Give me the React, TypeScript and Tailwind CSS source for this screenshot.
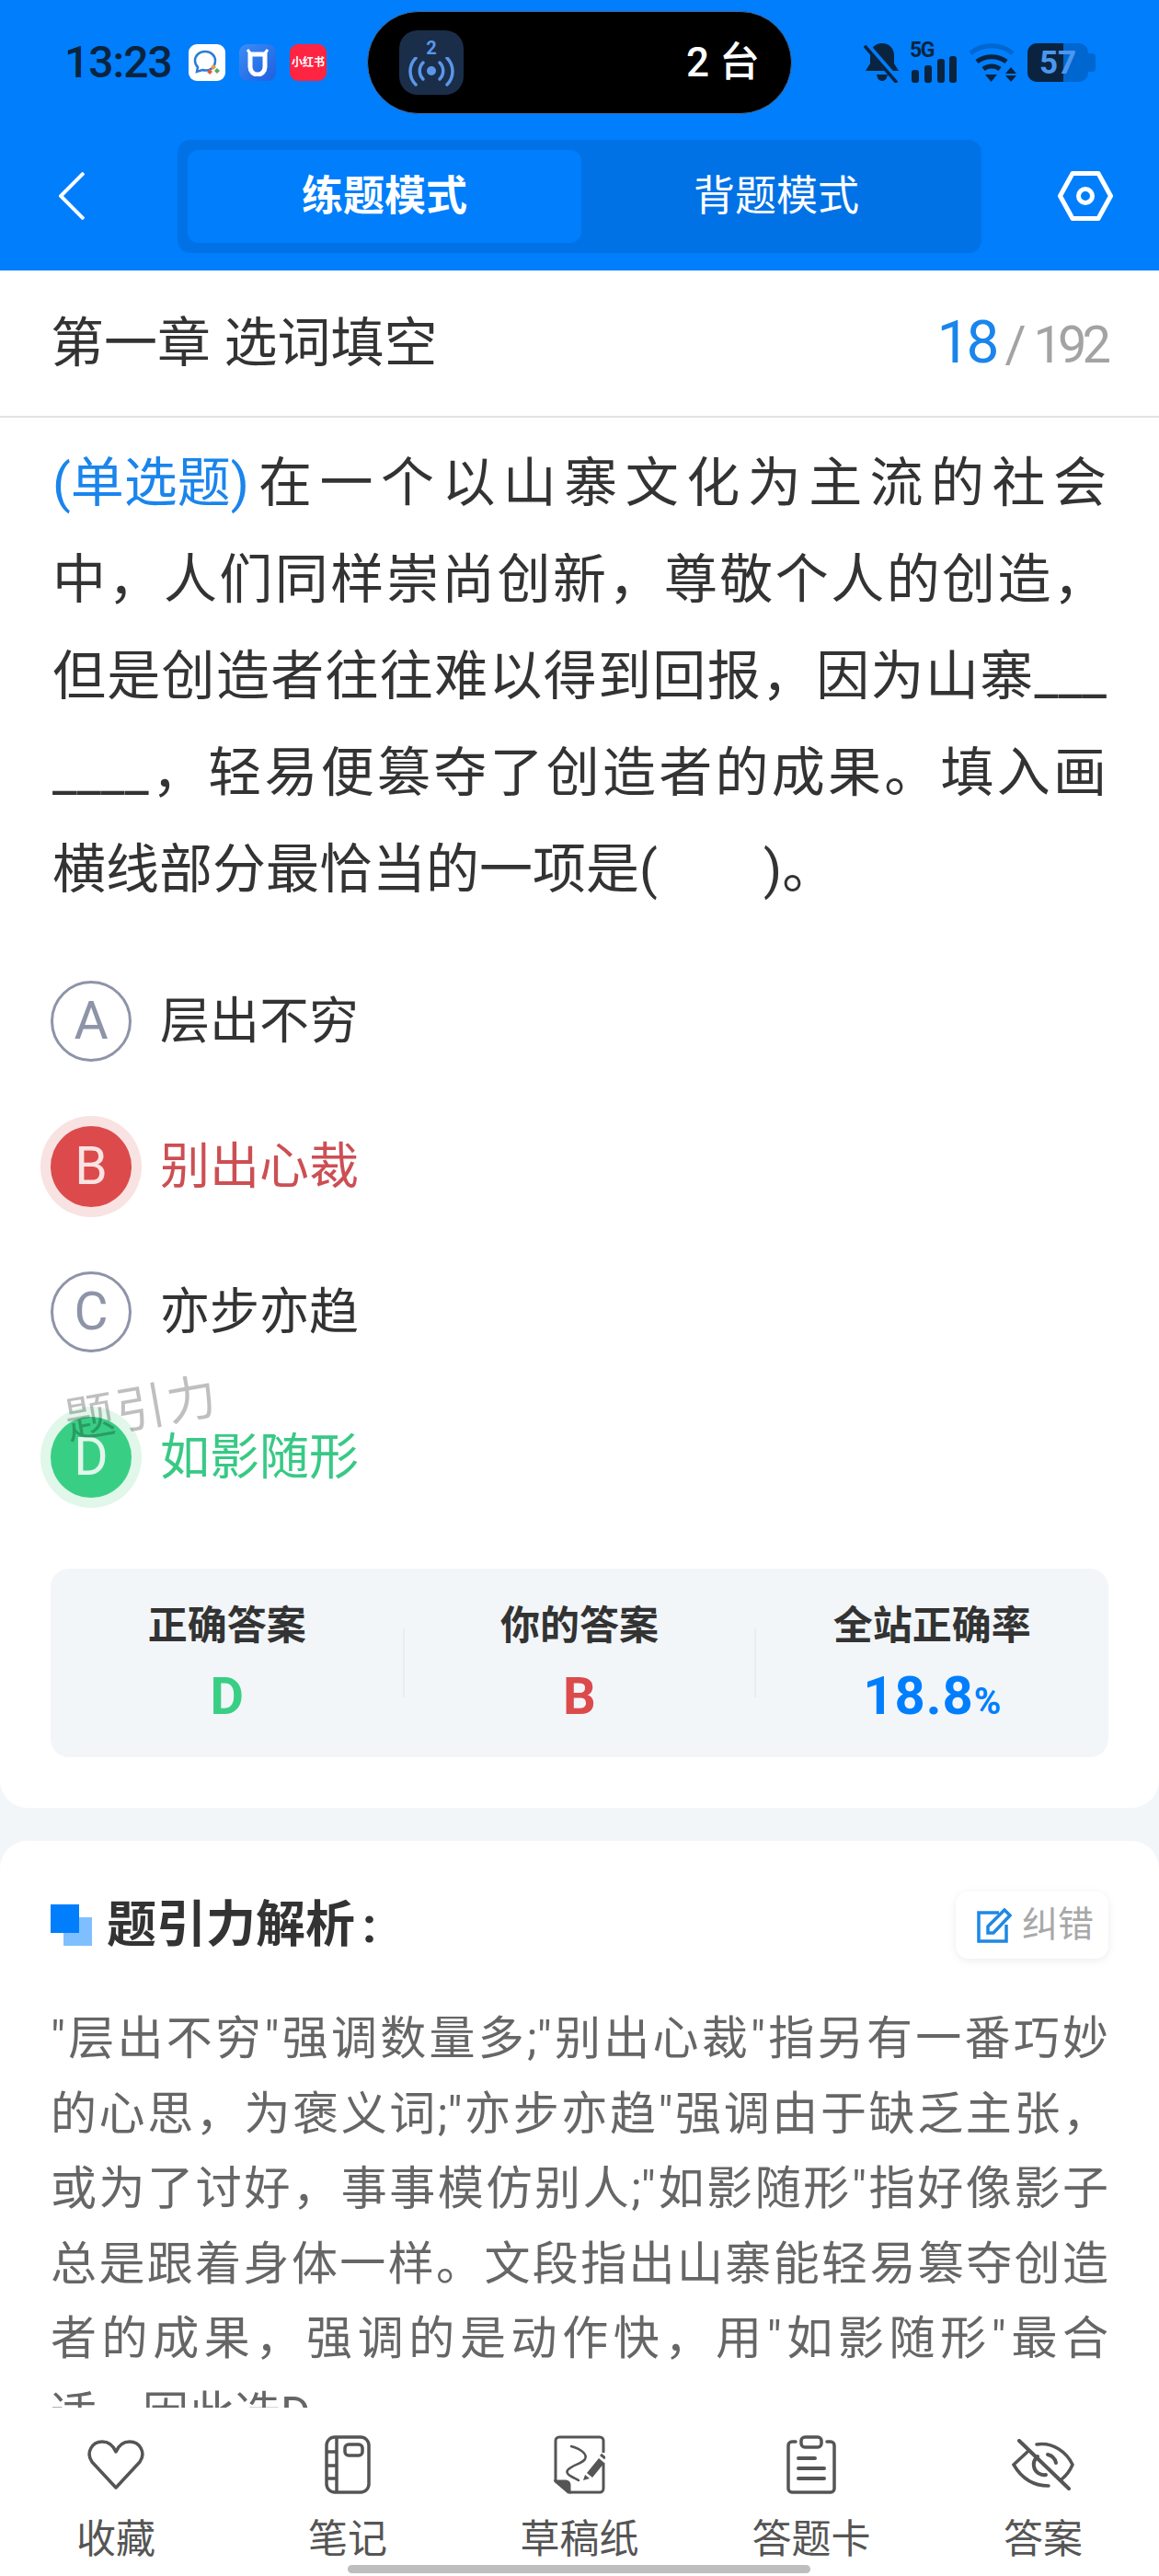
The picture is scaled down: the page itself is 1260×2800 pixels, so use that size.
const QUESTION_LINES = [
  "在一个以山寨文化为主流的社会",
  "中，人们同样崇尚创新，尊敬个人的创造，",
  "但是创造者往往难以得到回报，因为山寨___",
  "____，轻易便篡夺了创造者的成果。填入画",
];

const ANALYSIS_LINES = [
  "\"层出不穷\"强调数量多;\"别出心裁\"指另有一番巧妙",
  "的心思，为褒义词;\"亦步亦趋\"强调由于缺乏主张，",
  "或为了讨好，事事模仿别人;\"如影随形\"指好像影子",
  "总是跟着身体一样。文段指出山寨能轻易篡夺创造",
  "者的成果，强调的是动作快，用\"如影随形\"最合",
];

const OPTIONS = [
  { key: "A", text: "层出不穷", state: "idle" },
  { key: "B", text: "别出心裁", state: "wrong" },
  { key: "C", text: "亦步亦趋", state: "idle" },
  { key: "D", text: "如影随形", state: "right" },
];

function OptionRow({ label, text, state }: { label: string; text: string; state: string }) {
  let circle = "border-[3px] border-[#8e94a8] text-[#8e94a8]";
  let color = "text-[#333333]";
  if (state === "wrong") {
    circle = "bg-[#dc4a4c] text-[#fbe3e3] shadow-[0_0_0_11px_#f9e2e2]";
    color = "text-[#cc4f54]";
  }
  if (state === "right") {
    circle = "bg-[#38cf85] text-[#e0f7ea] shadow-[0_0_0_11px_#e0f7ea]";
    color = "text-[#38c985]";
  }
  return (
    <div className="flex h-[158px] items-center pl-[55px]">
      <div className={`flex h-[88px] w-[88px] items-center justify-center rounded-full text-[57px] font-normal ${circle}`}>
        {label}
      </div>
      <span className={`mt-[2px] ml-[31px] text-[54px] leading-none ${color}`}>{text}</span>
    </div>
  );
}

function Stat({ label, children }: { label: string; children: React.ReactNode }) {
  return (
    <div className="flex flex-col items-center">
      <span className="mt-[42px] text-[43px] leading-[40px] font-bold text-[#333333]">{label}</span>
      <div className="mt-[43px] flex h-[42px] items-end leading-none">{children}</div>
    </div>
  );
}

function BellOff() {
  return (
    <svg width="40" height="44" viewBox="0 0 40 44" fill="#0a2440">
      <path d="M20 1c8 0 13 6 13 13v9l5 8H2l5-8v-9C7 7 12 1 20 1z" />
      <path d="M14 35h12c-1 5-3 7-6 7s-5-2-6-7z" />
      <path d="M2 2l35 40" stroke="#007efc" strokeWidth="7" />
      <path d="M1 4l35 40" stroke="#0a2440" strokeWidth="3.5" />
    </svg>
  );
}

function Signal() {
  return (
    <div className="relative h-[44px] w-[50px]">
      <span className="absolute top-[-3px] left-[-2px] text-[23px] leading-[24px] font-bold tracking-[-1.5px] text-[#0a2440]">5G</span>
      <svg className="absolute top-0 left-0" width="50" height="44" viewBox="0 0 50 44" fill="#0a2440">
        <rect x="0" y="30" width="8" height="14" rx="3" />
        <rect x="14" y="25" width="8" height="19" rx="3" />
        <rect x="28" y="18" width="8" height="26" rx="3" />
        <rect x="41" y="15" width="8" height="29" rx="3" />
      </svg>
    </div>
  );
}

function Wifi() {
  return (
    <svg width="52" height="44" viewBox="0 0 52 44" fill="none">
      <path d="M2 12c13-11 33-11 46 0" stroke="#0067d1" strokeWidth="5" />
      <path d="M9 21c9-7 23-7 32 0" stroke="#0a2440" strokeWidth="5" />
      <path d="M16 29c5-4 13-4 18 0" stroke="#0a2440" strokeWidth="5" />
      <path d="M18 35h13l-6.500 8z" fill="#0a2440" />
      <path d="M46 27l6 7H40zM40 36h12l-6 7z" fill="#0a2440" />
    </svg>
  );
}

function Battery() {
  return (
    <div className="flex items-center">
      <div className="relative h-[42px] w-[66px] overflow-hidden rounded-[10px] bg-[#0067d1]">
        <div className="h-full w-[39px] bg-[#0a2440]" />
        <span className="absolute inset-0 flex items-center justify-center text-[35px] leading-none font-bold text-[#4c97ee]">57</span>
      </div>
      <div className="h-[20px] w-[8px] rounded-r-[4px] bg-[#0067d1]" />
    </div>
  );
}

function StatusBar() {
  return (
    <div className="flex h-[136px] items-center">
      <div className="flex w-[399px] items-center pl-[70px]">
        <span className="w-[135px] text-[48px] leading-none font-medium tracking-[-1px] text-[#0a2440]">13:23</span>
        <div className="flex h-[40px] w-[40px] items-center justify-center rounded-[9px] bg-white">
          <svg width="34" height="34" viewBox="0 0 34 34" fill="none">
            <path d="M15 5c-6 0-11 4-11 10 0 3 1 5 3 7l-1 5 6-2c8 2 14-3 14-10 0-6-5-10-11-10z" stroke="#2b7bd6" strokeWidth="2.500" />
            <path d="M24 19l3 3-3 3-3-3z" fill="#e8a13c" />
            <path d="M20 24l3 3-3 3-3-3z" fill="#dd5b3c" />
            <path d="M28 23l3 3-3 3-3-3z" fill="#55a868" />
          </svg>
        </div>
        <div className="ml-[15px] flex h-[40px] w-[40px] items-center justify-center rounded-[9px] bg-gradient-to-br from-[#3c8cf5] to-[#1f5fe0]">
          <svg width="28" height="30" viewBox="0 0 28 30" fill="none">
            <path d="M3 1l4 5h14l4-5" stroke="white" strokeWidth="3" />
            <path d="M6 6h16v14a8 8 0 0 1-16 0z" stroke="white" strokeWidth="5" />
          </svg>
        </div>
        <div className="ml-[15px] flex h-[40px] w-[40px] items-center justify-center rounded-[9px] bg-[#ff2442]">
          <span className="text-[12px] leading-none font-bold whitespace-nowrap text-white">小红书</span>
        </div>
      </div>
      <div className="flex h-[112px] w-[462px] items-center rounded-full border border-[#3c6ea8] bg-black pr-[34px] pl-[34px]">
        <div className="flex h-[70px] w-[70px] flex-col items-center justify-center rounded-[20px] bg-[#1a2e4a]">
          <span className="text-[20px] leading-[20px] font-bold text-[#5b96ea]">2</span>
          <svg width="50" height="32" viewBox="0 0 50 32" fill="none" stroke="#5b96ea" strokeWidth="3.500" strokeLinecap="round">
            <circle cx="25" cy="15" r="5" fill="#5b96ea" stroke="none" />
            <path d="M16 6c-5 5-5 13 0 18M34 6c5 5 5 13 0 18" />
            <path d="M8 1c-8 8-8 21 0 29M42 1c8 8 8 21 0 29" />
          </svg>
        </div>
        <span className="ml-auto text-[44px] leading-none font-medium whitespace-nowrap text-white">2 台</span>
      </div>
      <div className="flex items-center pl-[78px]">
        <BellOff />
        <div className="ml-[12px]"><Signal /></div>
        <div className="ml-[12px]"><Wifi /></div>
        <div className="ml-[12px]"><Battery /></div>
      </div>
    </div>
  );
}

function NavBar() {
  return (
    <div className="mt-[16px] flex h-[123px] items-center pl-[64px]">
      <svg className="-mt-[2px]" width="28" height="52" viewBox="0 0 28 52" fill="none" stroke="white" strokeWidth="4">
        <path d="M27 1L2 26l25 25" />
      </svg>
      <div className="ml-[101px] flex h-[123px] w-[874px] rounded-[14px] bg-[#0172e6] p-[11px]">
        <div className="flex w-[428px] items-center justify-center rounded-[12px] bg-[#007efc] text-[45px] font-bold text-white">练题模式</div>
        <div className="flex flex-1 items-center justify-center text-[45px] text-white">背题模式</div>
      </div>
      <svg className="-mt-[2px] ml-[83px]" width="60" height="54" viewBox="0 0 60 54" fill="none" stroke="white" strokeWidth="5" strokeLinejoin="round">
        <path d="M2.500 27L16 2.500h28L57.500 27 44 51.500H16z" />
        <circle cx="30" cy="27" r="7.500" />
      </svg>
    </div>
  );
}

function Heart() {
  return (
    <svg width="64" height="56" viewBox="0 0 64 56" fill="none" stroke="#555555" strokeWidth="3.500" strokeLinejoin="round">
      <path d="M32 53L6 25C-1 15 6 3 17 3c7 0 12 4 15 11 3-7 8-11 15-11 11 0 18 12 11 22z" />
    </svg>
  );
}

function Notebook() {
  return (
    <svg width="50" height="64" viewBox="0 0 50 64" fill="none" stroke="#555555" strokeWidth="3.500">
      <rect x="2" y="2" width="46" height="60" rx="9" />
      <path d="M13 2v60M2 18h11M2 33h11M2 47h11" />
      <rect x="22" y="10" width="19" height="12" rx="4" />
    </svg>
  );
}

function Sketch() {
  return (
    <svg width="56" height="64" viewBox="0 0 56 64" fill="none" stroke="#555555" strokeWidth="3">
      <path d="M54 19V6a4 4 0 0 0-4-4H6a4 4 0 0 0-4 4v44l14 12h34a4 4 0 0 0 4-4V30" />
      <path d="M3 50h10a4 4 0 0 1 4 4v7z" fill="#555555" />
      <path d="M19 12c10 3 18 8 15 14-3 5-14 6-19 12-3 5 7 8 12 11" strokeWidth="2.500" strokeLinecap="round" />
      <path d="M36 41l13-16 6 5-13 16z" fill="#555555" stroke="none" />
      <path d="M32 49l2-6 5 4z" fill="#555555" stroke="none" />
      <path d="M51 21l5 4" strokeWidth="3" />
    </svg>
  );
}

function Clipboard() {
  return (
    <svg width="54" height="64" viewBox="0 0 54 64" fill="none" stroke="#555555" strokeWidth="3.500" strokeLinecap="round">
      <path d="M10 7H6a4 4 0 0 0-4 4v47a4 4 0 0 0 4 4h42a4 4 0 0 0 4-4V11a4 4 0 0 0-4-4h-4" />
      <rect x="16" y="2" width="22" height="11" rx="4" />
      <path d="M13 25h18M13 36h28M13 47h28" strokeWidth="4" />
    </svg>
  );
}

function EyeOff() {
  return (
    <svg width="68" height="56" viewBox="0 0 68 56" fill="none" stroke="#555555" strokeWidth="3.500" strokeLinecap="round">
      <path d="M17 14L2 28c7 12 19 23 38 23M27 6c18-3 33 9 39 22-3 7-7 12-12 16" />
      <path d="M28 19c-3 3-5 7-4 11 1 6 7 10 13 9M39 17c5 1 8 5 9 9" strokeWidth="4" />
      <path d="M8 2l54 52" strokeWidth="4" />
    </svg>
  );
}

const TABS = [
  { label: "收藏", icon: <Heart /> },
  { label: "笔记", icon: <Notebook /> },
  { label: "草稿纸", icon: <Sketch /> },
  { label: "答题卡", icon: <Clipboard /> },
  { label: "答案", icon: <EyeOff /> },
];

export default function App() {
  return (
    <div className="relative flex h-[2800px] w-[1260px] flex-col overflow-hidden bg-[#f2f6f9] font-['Roboto','Noto_Sans_CJK_SC',sans-serif]">
      {/* Header */}
      <header className="h-[294px] shrink-0 bg-[#007efc]">
        <StatusBar />
        <NavBar />
      </header>

      <div className="min-h-0 flex-1 overflow-hidden">
        {/* Question card */}
        <section className="relative rounded-b-[30px] bg-white pb-[55px]">
          <div className="flex h-[160px] items-center justify-between border-b-2 border-[#e2e2e2] pr-[57px] pl-[55px]">
            <span className="text-[58px] leading-none text-[#333333]">第一章 选词填空</span>
            <div className="flex items-baseline">
              <span className="text-[64px] leading-none tracking-[-4px] text-[#1a85ec]">18</span>
              <span className="ml-[10px] text-[56px] leading-none text-[#a3a3a3]">/</span>
              <span className="ml-[8px] text-[56px] leading-none tracking-[-5px] text-[#a3a3a3]">192</span>
            </div>
          </div>

          <div className="px-[57px] pt-[19px] text-[58px] leading-[105px] text-[#333333]">
            <p className="flex justify-between">
              <span className="whitespace-nowrap text-[#1a85ec]">(单选题)</span>
              <span className="ml-[10px] flex-1 [text-align-last:justify]">{QUESTION_LINES[0]}</span>
            </p>
            {QUESTION_LINES.slice(1).map((line) => (
              <p key={line} className="whitespace-nowrap [text-align-last:justify]">{line}</p>
            ))}
            <p className="whitespace-pre">横线部分最恰当的一项是(        )。</p>
          </div>

          <div className="mt-[33px]">
            {OPTIONS.map((o) => (
              <OptionRow key={o.key} label={o.key} text={o.text} state={o.state} />
            ))}
          </div>

          {/* Watermark */}
          <span className="absolute top-[1211px] left-[70px] -rotate-[10deg] text-[54px] leading-none tracking-[2px] text-black/25">
            题引力
          </span>

          <div className="mx-[55px] mt-[42px] grid h-[205px] grid-cols-3 rounded-[20px] bg-[#f2f6f9]">
            <Stat label="正确答案">
              <span className="text-[56px] font-bold text-[#38cf85]">D</span>
            </Stat>
            <div className="relative">
              <div className="absolute top-[65px] bottom-[65px] left-0 w-[2px] bg-[#e9edf1]" />
              <div className="absolute top-[65px] right-0 bottom-[65px] w-[2px] bg-[#e9edf1]" />
              <Stat label="你的答案">
                <span className="text-[56px] font-bold text-[#dc4a4c]">B</span>
              </Stat>
            </div>
            <Stat label="全站正确率">
              <span className="text-[58px] font-bold tracking-[1px] text-[#007efc]">18.8</span>
              <span className="mb-[2px] text-[40px] font-bold text-[#007efc]">%</span>
            </Stat>
          </div>
        </section>

        {/* Analysis card */}
        <section className="mt-[36px] rounded-t-[30px] bg-white px-[55px] pt-[55px]">
          <div className="flex h-[73px] items-center">
            <div className="relative h-[45px] w-[45px]">
              <div className="absolute right-0 bottom-0 h-[31px] w-[31px] bg-[#80bfff]" />
              <div className="absolute top-0 left-0 h-[31px] w-[31px] bg-[#007efc]" />
            </div>
            <span className="ml-[16px] text-[54px] leading-none font-bold text-[#333333]">题引力解析</span>
            <span className="ml-[8px] text-[54px] leading-none font-bold text-[#333333]">:</span>
            <div className="ml-auto flex h-[73px] w-[166px] items-center rounded-[14px] bg-white pl-[23px] shadow-[0_2px_10px_rgba(0,0,0,0.08)]">
              <svg width="38" height="38" viewBox="0 0 38 38" fill="none" stroke="#1e88e5" strokeWidth="3.500">
                <path d="M24 5H2v31h30V18" />
                <path d="M12 27V20L30 2l6 6-18 19z" />
              </svg>
              <span className="ml-[11px] text-[39px] leading-none text-[#a8a8a8]">纠错</span>
            </div>
          </div>
          <div className="mt-[47px] text-[50px] leading-[81.6px] text-[#666666]">
            {ANALYSIS_LINES.map((line) => (
              <p key={line} className="whitespace-nowrap [text-align-last:justify]">{line}</p>
            ))}
            <p>适，因此选D。</p>
          </div>
        </section>
      </div>

      {/* Bottom tabs */}
      <nav className="grid h-[183px] shrink-0 grid-cols-5 bg-white pt-[30px]">
        {TABS.map((t) => (
          <div key={t.label} className="flex flex-col items-center">
            <div className="flex h-[64px] items-center justify-center">{t.icon}</div>
            <span className="mt-[27px] text-[43px] leading-[44px] text-[#555555]">{t.label}</span>
          </div>
        ))}
      </nav>

      {/* Home indicator */}
      <div className="absolute bottom-[3px] left-[378px] h-[9px] w-[503px] rounded-full bg-[#bebebe]" />
    </div>
  );
}
